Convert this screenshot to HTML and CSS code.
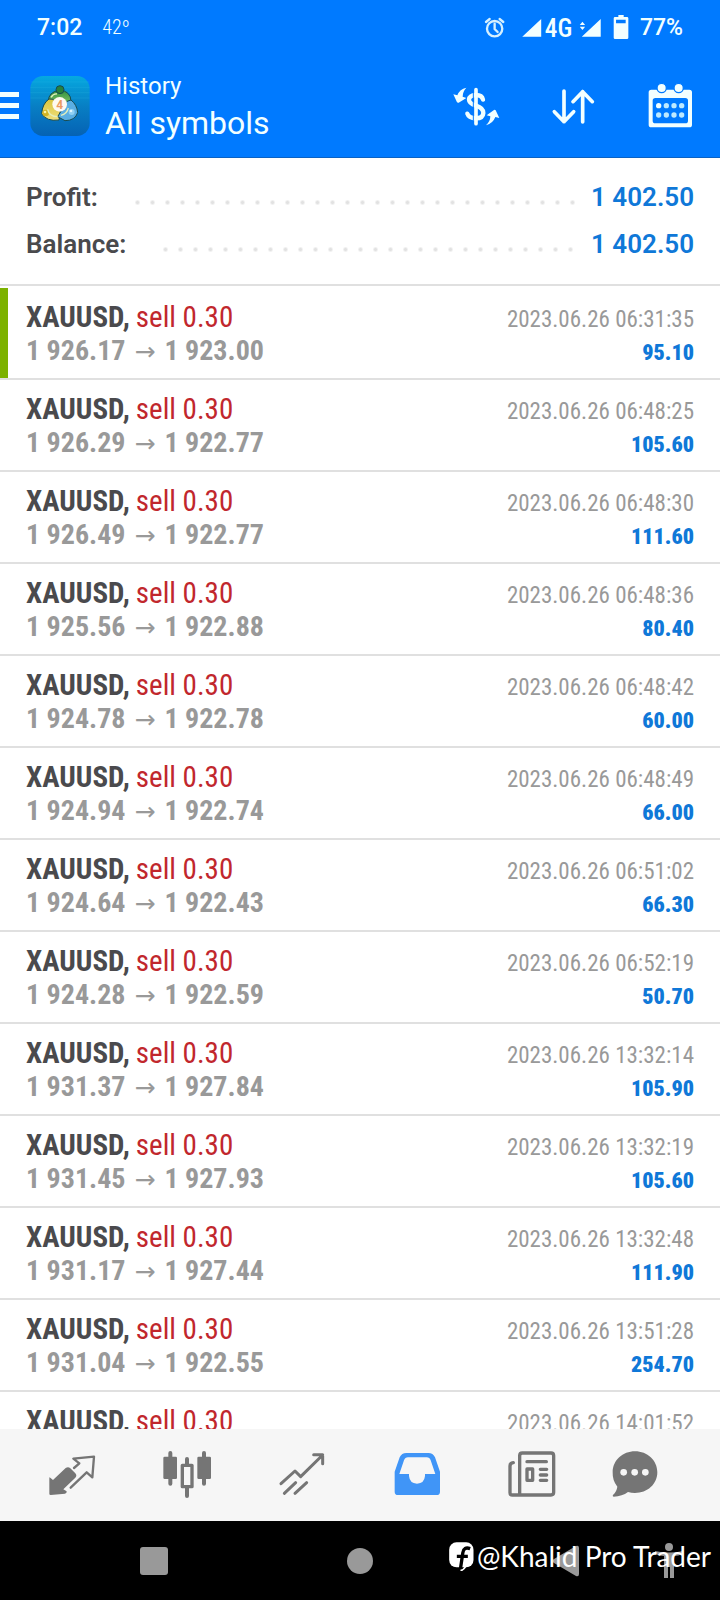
FILE: index.html
```html
<!DOCTYPE html>
<html lang="en">
<head>
<meta charset="utf-8">
<meta name="viewport" content="width=device-width, initial-scale=1">
<title>History</title>
<link rel="stylesheet" href="styles.css">
</head>
<body>
<div class="screen">
  <div class="status">
    <span class="clock">7:02</span>
    <span class="temp">42º</span>
    <svg class="status-icons" viewBox="370 36 442 84" aria-hidden="true">
      <g fill="none" stroke="#d5f0ff" stroke-width="7" stroke-linecap="round"><circle cx="405" cy="83" r="23"/><path d="M405 68v16l9 9M379 63l11-9M431 63l-11-9"/></g>
      <g fill="#f2ffff"><path d="M488 107h57V54zM667 107h57V54zM661 72l8-10 8 10zM661 77l8 10 8-10z"/><path fill-rule="evenodd" d="M777 42h16v6h10q4 0 4 4v58q0 4-4 4h-36q-4 0-4-4V52q0-4 4-4h10zM770 56v11h29V56z"/></g>
      <text class="network" x="556" y="108">4G</text>
    </svg>
    <span class="battery">77%</span>
  </div>

  <header class="bar">
    <button class="menu" aria-label="Menu"><i></i><i></i><i></i></button>
    <svg class="app" viewBox="91 48 180 180" aria-hidden="true">
      <defs>
        <linearGradient id="bg" x2="0" y2="1"><stop stop-color="#05a9e0"/><stop offset=".5" stop-color="#087fc4"/><stop offset="1" stop-color="#0562b4"/></linearGradient>
        <linearGradient id="gr" x2="0" y2="1"><stop stop-color="#2f8f3f"/><stop offset="1" stop-color="#8dcb6a"/></linearGradient>
        <linearGradient id="ye" x2="0" y2="1"><stop stop-color="#d9c53c"/><stop offset="1" stop-color="#f0df7c"/></linearGradient>
      </defs>
      <rect x="92" y="48" width="178" height="180" rx="38" fill="url(#bg)"/>
      <path d="M93 66h176M92 82h178M92 98h178M92 114h178" stroke="#35c0e8" stroke-width="2" opacity=".3"/>
      <g stroke="#174b50" stroke-width="3">
        <path d="M146 124q0-28 34-34 34 4 34 34l-12 14h-48z" fill="url(#gr)"/>
        <path d="M148 117q-20 14-22 44 14 24 52 19l4-24-20-38z" fill="url(#ye)"/>
        <path d="M214 120q18 14 20 38-8 24-38 24l-22-12 28-46z" fill="#5aaee3"/>
        <circle cx="181" cy="89" r="12" fill="#27823c"/>
      </g>
      <circle cx="138" cy="159" r="10" fill="#d1b323"/><circle cx="136" cy="156" r="4" fill="#fff4a5"/>
      <circle cx="216" cy="156" r="9" fill="#91d1f4"/><circle cx="214" cy="153" r="4" fill="#dff6ff"/>
      <path d="M144 148q4 22 30 22M154 112q8-12 18-10M206 144q-4 18-22 22" fill="none" stroke="#e5efbb" stroke-width="4"/>
      <circle cx="180" cy="133" r="22" fill="#fffaf0"/>
      <text class="app-digit" x="180" y="146" text-anchor="middle">4</text>
    </svg>
    <h1 class="title"><small>History</small>All symbols</h1>
    <div class="actions">
      <button aria-label="Deals"><svg viewBox="40 33 144 144">
        <g fill="none" stroke="#f2ffff" stroke-linecap="round"><path stroke-width="11" d="M112 56v102"/><path stroke-width="13" d="M133 86q-3-14-21-14-20 1-21 14 0 11 21 18 22 7 22 22-1 16-22 16-22-1-26-14"/></g>
        <path d="M104 60v88" stroke="#007aff" stroke-width="3"/>
        <g fill="#f2ffff"><path d="M83 50q-20 4-27 23l-12-3 11 24q2 2 5 1l23-14-11-4q0-15 11-27zM142 163q21-6 28-25l12 3-11-23q-2-3-5-1l-22 16 11 3q0 15-13 27z"/></g></svg></button>
      <button aria-label="Sort"><svg viewBox="331 33 144 144"><path d="M376 60v92M347 122l29 30 29-30M432 153V62M403 92l29-30 29 30" fill="none" stroke="#f2ffff" stroke-width="11" stroke-linecap="round" stroke-linejoin="round"/></svg></button>
      <button aria-label="Period"><svg viewBox="619 33 144 144">
        <path fill="#f2ffff" fill-rule="evenodd" d="M635 56h114q8 0 8 8v97q0 8-8 8H635q-8 0-8-8V64q0-8 8-8zM647 81q-8 0-8 8v60q0 8 8 8h90q8 0 8-8V89q0-8-8-8z"/>
        <g fill="#f2ffff" stroke="#007aff" stroke-width="4"><circle cx="666" cy="51" r="14"/><circle cx="717" cy="51" r="14"/></g>
        <g fill="#bdeaff"><circle cx="657" cy="104" r="8" fill="#f2ffff"/><circle cx="680" cy="104" r="8"/><circle cx="703" cy="104" r="8"/><circle cx="726" cy="104" r="8"/><circle cx="657" cy="132" r="8"/><circle cx="680" cy="132" r="8"/><circle cx="703" cy="132" r="8"/><circle cx="726" cy="132" r="8"/></g></svg></button>
    </div>
  </header>

  <main class="content">
    <dl class="summary">
      <div><dt>Profit:</dt><dd>1 402.50</dd></div>
      <div><dt>Balance:</dt><dd>1 402.50</dd></div>
    </dl>
    <ul class="deals">
      <li class="current"><p><b>XAUUSD,</b> <em>sell 0.30</em><time>2023.06.26 06:31:35</time></p><p class="prices">1 926.17<i>→</i>1 923.00<strong>95.10</strong></p></li>
      <li><p><b>XAUUSD,</b> <em>sell 0.30</em><time>2023.06.26 06:48:25</time></p><p class="prices">1 926.29<i>→</i>1 922.77<strong>105.60</strong></p></li>
      <li><p><b>XAUUSD,</b> <em>sell 0.30</em><time>2023.06.26 06:48:30</time></p><p class="prices">1 926.49<i>→</i>1 922.77<strong>111.60</strong></p></li>
      <li><p><b>XAUUSD,</b> <em>sell 0.30</em><time>2023.06.26 06:48:36</time></p><p class="prices">1 925.56<i>→</i>1 922.88<strong>80.40</strong></p></li>
      <li><p><b>XAUUSD,</b> <em>sell 0.30</em><time>2023.06.26 06:48:42</time></p><p class="prices">1 924.78<i>→</i>1 922.78<strong>60.00</strong></p></li>
      <li><p><b>XAUUSD,</b> <em>sell 0.30</em><time>2023.06.26 06:48:49</time></p><p class="prices">1 924.94<i>→</i>1 922.74<strong>66.00</strong></p></li>
      <li><p><b>XAUUSD,</b> <em>sell 0.30</em><time>2023.06.26 06:51:02</time></p><p class="prices">1 924.64<i>→</i>1 922.43<strong>66.30</strong></p></li>
      <li><p><b>XAUUSD,</b> <em>sell 0.30</em><time>2023.06.26 06:52:19</time></p><p class="prices">1 924.28<i>→</i>1 922.59<strong>50.70</strong></p></li>
      <li><p><b>XAUUSD,</b> <em>sell 0.30</em><time>2023.06.26 13:32:14</time></p><p class="prices">1 931.37<i>→</i>1 927.84<strong>105.90</strong></p></li>
      <li><p><b>XAUUSD,</b> <em>sell 0.30</em><time>2023.06.26 13:32:19</time></p><p class="prices">1 931.45<i>→</i>1 927.93<strong>105.60</strong></p></li>
      <li><p><b>XAUUSD,</b> <em>sell 0.30</em><time>2023.06.26 13:32:48</time></p><p class="prices">1 931.17<i>→</i>1 927.44<strong>111.90</strong></p></li>
      <li><p><b>XAUUSD,</b> <em>sell 0.30</em><time>2023.06.26 13:51:28</time></p><p class="prices">1 931.04<i>→</i>1 922.55<strong>254.70</strong></p></li>
      <li><p><b>XAUUSD,</b> <em>sell 0.30</em><time>2023.06.26 14:01:52</time></p></li>
    </ul>
  </main>

  <nav class="tabs">
    <button aria-label="Quotes"><svg viewBox="139 207 156 156"><path fill="#757575" d="M150 292l10 8 38-36q8-5 14 1l15 15q6 7 0 13l-36 35 10 6q1 6-5 7l-43 4q-4 0-4-4v-45q0-4 1-4z"/><path fill="none" stroke="#757575" stroke-width="7" stroke-linecap="round" stroke-linejoin="round" d="M223 264l16-14-18-14 62-6-5 62-17-15-48 46"/></svg></button>
    <button aria-label="Charts"><svg viewBox="484 207 156 156"><g fill="none" stroke="#757575" stroke-width="12" stroke-linecap="round"><path d="M512 219v92M613 219v92M562 237v14M562 324v24"/></g><rect x="491" y="230" width="41" height="67" rx="4" fill="#757575"/><rect x="593" y="230" width="41" height="67" rx="4" fill="#757575"/><rect x="548" y="256" width="29" height="64" fill="none" stroke="#757575" stroke-width="10" stroke-linejoin="round"/></svg></button>
    <button aria-label="Trade"><svg viewBox="829 207 156 156"><path fill="none" stroke="#757575" stroke-width="9" stroke-linecap="round" stroke-linejoin="round" d="M844 311l42-38 17 17 66-65M942 224h27v27M854 340l34-32M886 340l35-32"/></svg></button>
    <button aria-label="History"><svg viewBox="94 207 156 156"><path fill="#4095f7" fill-rule="evenodd" d="M140 219h66q14 0 20 13l15 43v60q0 10-10 10H115q-10 0-10-10v-60l15-43q6-13 20-13zM145 232q-9 0-12 9l-14 41h29v6q2 22 24 23 22-1 24-23v-6h31l-14-41q-3-9-12-9z"/></svg></button>
    <button aria-label="News"><svg viewBox="442 207 156 156"><g fill="none" stroke="#757575" stroke-width="10" stroke-linecap="round" stroke-linejoin="round"><path d="M464 248q-10 1-10 10v80q0 7 7 7h116q8 0 8-8V227q0-8-8-8h-86q-8 0-8 8v118"/><path d="M505 245h58M545 268h19M545 285h19M545 301h19"/><path d="M505 267h17v34h-17z"/></g></svg></button>
    <button aria-label="Messages"><svg viewBox="751 207 156 156"><path fill="#757575" d="M829 214c37 0 67 27 67 63s-30 62-67 62q-11 0-21-3-17 13-43 14-5-1-2-5 11-10 13-25-15-18-14-43c0-36 30-63 67-63z"/><g fill="#f6f6f6"><circle cx="795" cy="277" r="10"/><circle cx="828" cy="277" r="10"/><circle cx="860" cy="277" r="10"/></g></svg></button>
  </nav>

  <div class="system">
    <button aria-label="Recent apps"><svg viewBox="0 0 32 32"><rect x="2" y="2" width="28" height="28" rx="3"/></svg></button>
    <button class="home" aria-label="Home"><svg viewBox="0 0 32 32"><circle cx="16" cy="16" r="13"/></svg></button>
    <button class="back" aria-label="Back"><svg viewBox="0 0 32 32"><path d="M3 16Q2 15 4 14L26 1Q29 0 29 3v26q0 3-3 2L4 18q-2-1-1-2z"/></svg></button>
    <button aria-label="Accessibility"><svg viewBox="0 0 32 36"><circle cx="16" cy="4" r="4"/><path d="M2 8q14 3 28 0v3q-5 2-9 2v22h-4V24h-2v11h-4V13q-4 0-9-2z"/></svg></button>
    <div class="credit">
      <svg viewBox="275 488 74 90" aria-hidden="true"><rect x="275" y="492" width="73" height="75" rx="22" fill="#fff"/><path d="M338 511q-19-7-22 12l-8 54M298 534h33" fill="none" stroke="#000" stroke-width="10"/><path d="M309 577q10-2 15-12" stroke="#fff" stroke-width="5" fill="none"/></svg><span>@Khalid Pro Trader</span>
    </div>
  </div>
</div>
</body>
</html>
```

FILE: styles.css
```css
* { box-sizing: border-box; }
body, h1, ul, dl, dd, p { margin: 0; padding: 0; }
body { font-family: Roboto, sans-serif; background: #fff; }
button { border: 0; padding: 0; background: none; display: flex; align-items: center; justify-content: center; }
svg { display: block; }

.screen { display: flex; flex-direction: column; height: 100vh; overflow: hidden; }

.status { display: flex; align-items: center; height: 54px; padding: 0 37px; background: #007aff; color: #f2ffff; font-size: 23px; font-weight: 500; }
.temp { margin-left: 20px; font: 300 20px "Roboto Condensed", "Liberation Sans Narrow", sans-serif; }
.status-icons { width: 147px; height: 28px; margin-left: auto; overflow: visible; }
.network { font: 500 76px "Roboto Condensed", "Liberation Sans Narrow", sans-serif; fill: #f2ffff; }
.battery { margin-left: 10px; }

.bar { display: flex; align-items: center; height: 104px; padding-right: 26px; background: #007aff; border-bottom: 1px solid #0a62c4; color: #f2ffff; }
.menu { width: 19px; flex-direction: column; align-items: stretch; gap: 6px; }
.menu i { height: 5px; background: #f2ffff; }
.app { width: 60px; height: 60px; margin-left: 11px; }
.app-digit { font: bold 36px Roboto, sans-serif; fill: #ec9a62; }
.title { margin-left: 15px; font-size: 32px; line-height: 40px; font-weight: 400; }
.title small { display: block; font-size: 24px; line-height: 34px; }
.actions { display: flex; gap: 49px; margin-left: auto; }
.actions svg { width: 48px; height: 48px; }

.content { flex: 1; min-height: 0; overflow: hidden; }
.summary { padding: 16px 26px; border-bottom: 2px solid #e0e0e0; margin-bottom: 2px; font-size: 26px; line-height: 47px; }
.summary div { display: flex; align-items: center; }
.summary dt { color: #4a4a4d; font-weight: 600; }
.summary dd { order: 2; color: #0f78d8; font-weight: 600; }
.summary div::after { content: ""; order: 1; flex: 1; height: 15px; margin: 10px 16px 0 32px; background: radial-gradient(circle, #e2e2e2 1px, transparent 3px) 0 0 / 15px 15px repeat-x; }

.deals { list-style: none; font-family: "Roboto Condensed", "Liberation Sans Narrow", sans-serif; }
.deals li { height: 92px; padding: 13px 26px 0; border-bottom: 2px solid #e0e0e0; }
.deals .current { box-shadow: inset 8px 0 #7cb200; }
.deals p { display: flex; align-items: baseline; font-size: 29px; line-height: 32px; white-space: pre; }
.deals b { color: #4a4a4d; font-weight: 700; }
.deals em { color: #c1272d; font-style: normal; margin-left: 6px; }
.deals time { margin-left: auto; color: #999; font-size: 23px; }
.deals .prices { color: #999; font-size: 28px; font-weight: 700; line-height: 30px; }
.deals i { margin: 0 9px; font: 25px "DejaVu Sans", sans-serif; line-height: 24px; }
.deals strong { margin-left: auto; color: #0f78d8; font-size: 22px; }

.tabs { display: grid; grid-template-columns: repeat(5, 115fr) 92fr; height: 92px; padding: 0 39px 0 14px; background: #f6f6f6; }
.tabs svg { width: 52px; height: 52px; }

.system { position: relative; display: grid; grid-template-columns: repeat(6, 1fr); height: 79px; padding-left: 102px; background: #000; }
.system button svg { width: 32px; height: 36px; fill: #999; }
.home { grid-column: 3; }
.back { grid-column: 5; }
.credit { position: absolute; right: 9px; top: 19px; display: flex; align-items: center; gap: 3px; color: #fff; font: 28px/32px Lato, sans-serif; white-space: nowrap; }
.credit svg { width: 25px; height: 30px; }
```
